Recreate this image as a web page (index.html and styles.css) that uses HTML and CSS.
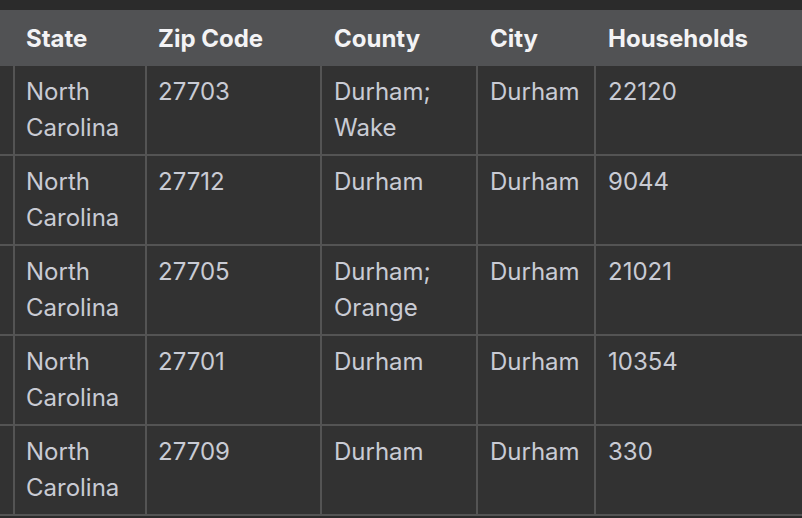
FILE: index.html
```html
<!DOCTYPE html>
<html>
<head>
<meta charset="utf-8">
<link rel="stylesheet" href="styles.css">
</head>
<body>
<div class="frame">
  <table class="data">
    <colgroup>
      <col class="c0"><col class="c1"><col class="c2"><col class="c3"><col class="c4"><col class="c5">
    </colgroup>
    <thead>
      <tr>
        <th class="lead"></th>
        <th>State</th>
        <th>Zip Code</th>
        <th class="wide">County</th>
        <th class="wide">City</th>
        <th class="wide">Households</th>
      </tr>
    </thead>
    <tbody>
      <tr><td class="lead"></td><td>North<br>Carolina</td><td>27703</td><td class="wide">Durham;<br>Wake</td><td class="wide">Durham</td><td class="wide">22120</td></tr>
      <tr><td class="lead"></td><td>North<br>Carolina</td><td>27712</td><td class="wide">Durham</td><td class="wide">Durham</td><td class="wide">9044</td></tr>
      <tr><td class="lead"></td><td>North<br>Carolina</td><td>27705</td><td class="wide">Durham;<br>Orange</td><td class="wide">Durham</td><td class="wide">21021</td></tr>
      <tr><td class="lead"></td><td>North<br>Carolina</td><td>27701</td><td class="wide">Durham</td><td class="wide">Durham</td><td class="wide">10354</td></tr>
      <tr><td class="lead"></td><td>North<br>Carolina</td><td>27709</td><td class="wide">Durham</td><td class="wide">Durham</td><td class="wide">330</td></tr>
    </tbody>
  </table>
</div>
</body>
</html>
```
FILE: styles.css
```css
html, body {
  margin: 0;
  padding: 0;
  background: #2b2b2b;
}
.frame {
  width: 802px;
  height: 518px;
  overflow: hidden;
  padding-top: 10px;
  box-sizing: border-box;
}
.data {
  border-collapse: separate;
  border-spacing: 0;
  table-layout: fixed;
  width: 1000px;
  font-family: Inter, "Noto Sans", sans-serif;
  font-size: 24px;
  line-height: 36px;
  background: #323232;
}
.c0 { width: 13px; }
.c1 { width: 132px; }
.c2 { width: 175px; }
.c3 { width: 156px; }
.c4 { width: 118px; }
.c5 { width: 406px; }
.data th {
  background: #515254;
  color: #f3f3f5;
  font-weight: 700;
  text-align: left;
  height: 56px;
  box-sizing: border-box;
  padding: 2px 11px 0;
  border-left: 2px solid #515254;
  vertical-align: middle;
}
.data td {
  color: #c9cbd4;
  text-align: left;
  vertical-align: top;
  padding: 8px 11px 8px;
  border-left: 2px solid #545454;
  border-bottom: 2px solid #545454;
}
.data th.wide,
.data td.wide {
  padding-left: 12px;
}
.data .lead {
  padding: 0;
  border-left: none;
}
```
